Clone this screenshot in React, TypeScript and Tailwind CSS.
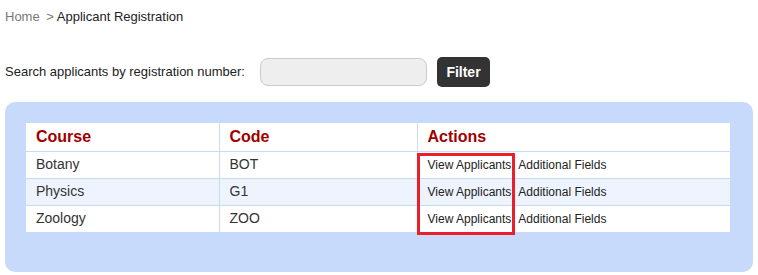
const courses = [
  { name: "Botany", code: "BOT" },
  { name: "Physics", code: "G1" },
  { name: "Zoology", code: "ZOO" },
];

export default function App() {
  return (
    <div className="w-[758px] h-[275px] bg-white text-[#333] font-['Liberation_Sans',Arial,sans-serif]">
      <div className="pl-[5px] pt-[9px] text-[13px] leading-[16px]">
        <span className="text-[#777]">Home</span>
        <span className="text-[#777] ml-[3px]"> &gt; </span>
        <span className="text-[#222]">Applicant Registration</span>
      </div>

      <div className="flex items-center pl-[5px] mt-[32px] h-[30px]">
        <span className="text-[13px] text-[#222] w-[255px]">Search applicants by registration number:</span>
        <input className="w-[167px] h-[28px] rounded-[8px] border border-[#ccc] bg-[#eee] outline-none" />
        <button className="ml-[10px] w-[53px] h-[30px] rounded-[5px] bg-[#333] text-white font-bold text-[14px]">
          Filter
        </button>
      </div>

      <div className="relative mx-[5px] mt-[15px] h-[170px] rounded-[10px] bg-[#c7dafc] pt-[21px] px-[21px]">
        <table className="w-[704px] border-collapse bg-white">
          <thead>
            <tr className="h-[28px]">
              <th className="w-[193px] text-left pl-[10px] text-[16px] font-bold text-[#a00000] border-r border-b border-[#c7dafc]">Course</th>
              <th className="w-[198px] text-left pl-[10px] text-[16px] font-bold text-[#a00000] border-r border-b border-[#c7dafc]">Code</th>
              <th className="text-left pl-[10px] text-[16px] font-bold text-[#a00000] border-b border-[#c7dafc]">Actions</th>
            </tr>
          </thead>
          <tbody>
            {courses.map((c, i) => (
              <tr key={c.code} className={`h-[27px] ${i === 1 ? "bg-[#eef4fe]" : "bg-white"}`}>
                <td className="pl-[10px] text-[14px] border-r border-b border-[#c7dafc]">{c.name}</td>
                <td className="pl-[10px] text-[14px] border-r border-b border-[#c7dafc]">{c.code}</td>
                <td className="pl-[10px] text-[12px] text-[#222] border-b border-[#c7dafc]">
                  <span className="mr-[7px]">View Applicants</span>
                  <span>Additional Fields</span>
                </td>
              </tr>
            ))}
          </tbody>
        </table>
        <div className="absolute left-[412px] top-[51px] w-[98px] h-[82px] border-[3px] border-[#e8202a]" />
      </div>
    </div>
  );
}
